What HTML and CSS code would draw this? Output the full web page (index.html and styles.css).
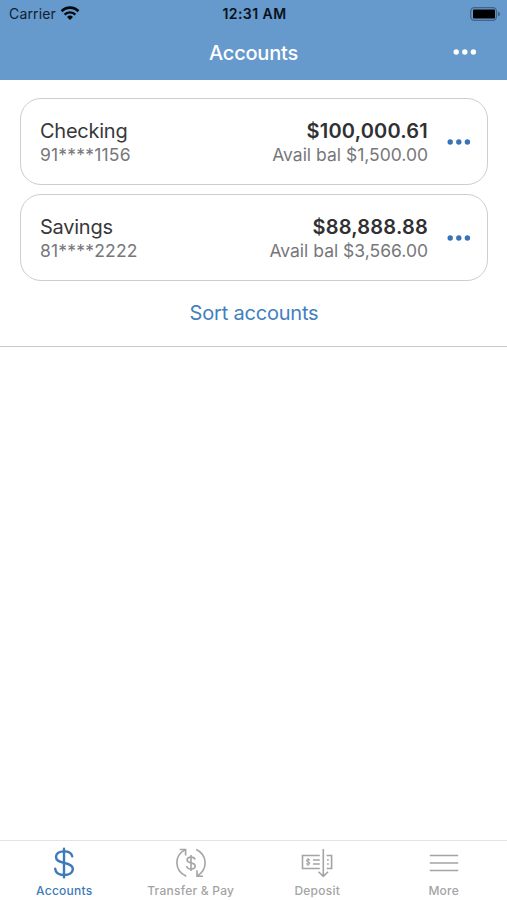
FILE: index.html
```
<!DOCTYPE html>
<html lang="en">
<head>
    <meta charset="UTF-8">
    <meta name="viewport" content="width=device-width, initial-scale=1">
    <title>Accounts</title>
    <link rel="stylesheet" href="styles.css">
</head>
<body>
    <header class="header">
        <div class="status-bar">
            <div class="carrier">
                <span>Carrier</span>
                <svg class="wifi" width="20" height="16" viewBox="0 0 20 16">
                    <path d="M1.600 5.200a11.800 11.800 0 0 1 16.800 0" fill="none" stroke="#05090d" stroke-width="2.7"/>
                    <path d="M4.600 8.600a7.600 7.600 0 0 1 10.800 0" fill="none" stroke="#05090d" stroke-width="2.4"/>
                    <path d="M7 11a4.300 4.300 0 0 1 6 0L10 14z" fill="#05090d"/>
                </svg>
            </div>
            <span class="time">12:31 AM</span>
            <svg class="battery" width="31" height="14" viewBox="0 0 31 14">
                <rect x=".7" y=".7" width="25.8" height="12.6" rx="3.8" fill="none" stroke="#416586" stroke-width="1.3"/>
                <rect x="3" y="2.4" width="22" height="9.2" rx="1" fill="#000"/>
                <path d="M28 4.600q2.200.8 2.200 2.400T28 9.400z" fill="#416586"/>
            </svg>
        </div>
        <div class="title-bar">
            <h1>Accounts</h1>
            <button class="dots" aria-label="Options">
                <svg width="24" height="6" viewBox="0 0 24 6"><circle cx="3.200" cy="3" r="2.7"/><circle cx="11.800" cy="3" r="2.7"/><circle cx="20.400" cy="3" r="2.7"/></svg>
            </button>
        </div>
    </header>

    <main class="accounts">
        <div class="card">
            <div class="account">
                <div class="name">Checking</div>
                <div class="number">91****1156</div>
            </div>
            <div class="balance">
                <div class="amount">$100,000.61</div>
                <div class="available">Avail bal $1,500.00</div>
            </div>
            <button class="dots" aria-label="Checking options">
                <svg width="24" height="6" viewBox="0 0 24 6"><circle cx="3.200" cy="3" r="2.7"/><circle cx="11.800" cy="3" r="2.7"/><circle cx="20.400" cy="3" r="2.7"/></svg>
            </button>
        </div>
        <div class="card">
            <div class="account">
                <div class="name">Savings</div>
                <div class="number">81****2222</div>
            </div>
            <div class="balance">
                <div class="amount">$88,888.88</div>
                <div class="available">Avail bal $3,566.00</div>
            </div>
            <button class="dots" aria-label="Savings options">
                <svg width="24" height="6" viewBox="0 0 24 6"><circle cx="3.200" cy="3" r="2.7"/><circle cx="11.800" cy="3" r="2.7"/><circle cx="20.400" cy="3" r="2.7"/></svg>
            </button>
        </div>
        <a class="sort">Sort accounts</a>
    </main>

    <nav class="tabs">
        <a class="tab active">
            <svg width="32" height="32" viewBox="0 0 32 32" fill="none" stroke="currentColor" stroke-width="2.4" stroke-linecap="round">
                <path d="M16 1.800v28.400"/>
                <path d="M24.200 9.400C23.600 6.200 20.500 4.400 16 4.400c-4.600 0-8 2-8 5.600 0 3.700 3.300 4.800 8 5.900 5 1.200 8.800 2.300 8.800 6.200 0 3.800-3.800 5.900-8.600 5.900-5 0-8.600-2.200-9-6.200"/>
            </svg>
            <span>Accounts</span>
        </a>
        <a class="tab">
            <svg width="32" height="32" viewBox="0 0 32 32" fill="none" stroke="currentColor" stroke-width="1.6">
                <path d="M11.300 29.300C5.200 26.600 1.900 21.500 1.900 15.800c0-5.400 3-10.200 8-12.900M4.800 2.500h5.800v6"/>
                <path d="M21.200 2.400c5.700 2.600 8.900 7.800 8.900 13.400 0 5.400-2.900 10.300-7.900 13.100M22 23.200v6h6"/>
                <path d="M16 8v16M20 12.700c-.3-1.700-1.800-2.600-4-2.600s-3.900 1-3.900 2.800 1.500 2.400 3.900 3c2.600.6 4.200 1.300 4.200 3.200s-1.800 3-4.200 3-4.100-1.100-4.300-3.100"/>
            </svg>
            <span>Transfer &amp; Pay</span>
        </a>
        <a class="tab">
            <svg width="32" height="32" viewBox="0 0 32 32" fill="none" stroke="currentColor" stroke-width="1.6">
                <path d="M18.800 21.500H1.500V8.500h17.300M25.600 8.500h5v13h-5"/>
                <path d="M22.300 2v27M17.500 24.700l4.800 4.700 4.800-4.700"/>
                <path d="M12 13h6.800M12 17h6.800"/>
                <path d="M7 11v8M8.700 13.300c-.3-1.200-3.200-1.200-3.200.2 0 1.600 3.200 1 3.200 2.800 0 1.500-3.100 1.500-3.400.1" stroke-width="1.1"/>
                <path d="M26 13h1.800M26 17h1.800"/>
            </svg>
            <span>Deposit</span>
        </a>
        <a class="tab">
            <svg width="32" height="32" viewBox="0 0 32 32" fill="none" stroke="currentColor" stroke-width="1.7">
                <path d="M1.800 8.500h28.400M1.800 16h28.400M1.800 23.500h28.400"/>
            </svg>
            <span>More</span>
        </a>
    </nav>
</body>
</html>
```

FILE: styles.css
```
* {
    box-sizing: border-box;
}
body {
    margin: 0;
    height: 100vh;
    display: flex;
    flex-direction: column;
    font-family: Inter, "Liberation Sans", sans-serif;
    background: #fff;
    color: #38383a;
}
button {
    border: none;
    padding: 0;
    background: none;
}
.header {
    height: 80px;
    background: #6699cc;
    flex: none;
}
.status-bar {
    display: grid;
    grid-template-columns: 1fr auto 1fr;
    align-items: center;
    height: 27px;
    padding: 0 6px 0 8px;
    font-size: 14px;
    color: #10202f;
}
.carrier {
    display: flex;
    align-items: center;
    gap: 5px;
    padding-left: 1px;
    letter-spacing: .15px;
}
.wifi {
    margin-left: -1px;
}
.time {
    font-weight: 600;
    letter-spacing: .45px;
    color: #07111a;
}
.battery {
    justify-self: end;
}
.title-bar {
    display: grid;
    grid-template-columns: 1fr auto 1fr;
    align-items: center;
    height: 50px;
    padding: 0 30px;
}
h1 {
    grid-column: 2;
    margin: 2px 0 0;
    font-size: 20px;
    font-weight: 500;
    letter-spacing: -.2px;
    color: #fff;
}
.dots {
    display: flex;
    color: #3674b5;
}
.dots svg {
    fill: currentColor;
}
.title-bar .dots {
    justify-self: end;
    color: #fff;
}
.accounts {
    display: flex;
    flex-direction: column;
    gap: 9px;
    height: 267px;
    padding: 18px 19px 0 20px;
    border-bottom: 1px solid #c8c8c8;
}
.card {
    display: flex;
    align-items: center;
    height: 87px;
    padding: 0 16px 0 19px;
    border: 1px solid #cecece;
    border-radius: 21px;
}
.account {
    flex: 1;
}
.balance {
    margin-right: 19px;
    text-align: right;
}
.name, .amount {
    font-size: 20px;
    line-height: 25px;
}
.name {
    letter-spacing: -.25px;
}
.amount {
    font-weight: 600;
    letter-spacing: .2px;
    color: #303032;
}
.number, .available {
    font-size: 17.5px;
    line-height: 21px;
    color: #77777a;
}
.number {
    letter-spacing: .2px;
}
.sort {
    margin-top: 11px;
    text-align: center;
    font-size: 20px;
    line-height: 24px;
    letter-spacing: -.2px;
    color: #427fbd;
}
.tabs {
    display: grid;
    grid-template-columns: repeat(4, 1fr);
    height: 60px;
    margin-top: auto;
    border-top: 1px solid #e4e4e4;
    padding-left: 1px;
}
.tab {
    display: flex;
    flex-direction: column;
    align-items: center;
    padding-top: 6px;
    font-size: 12px;
    font-weight: 500;
    line-height: 16px;
    letter-spacing: .25px;
    color: #a4a4a4;
}
.tab span {
    margin-top: 4px;
}
.tab.active {
    color: #3d7ab8;
}
```
